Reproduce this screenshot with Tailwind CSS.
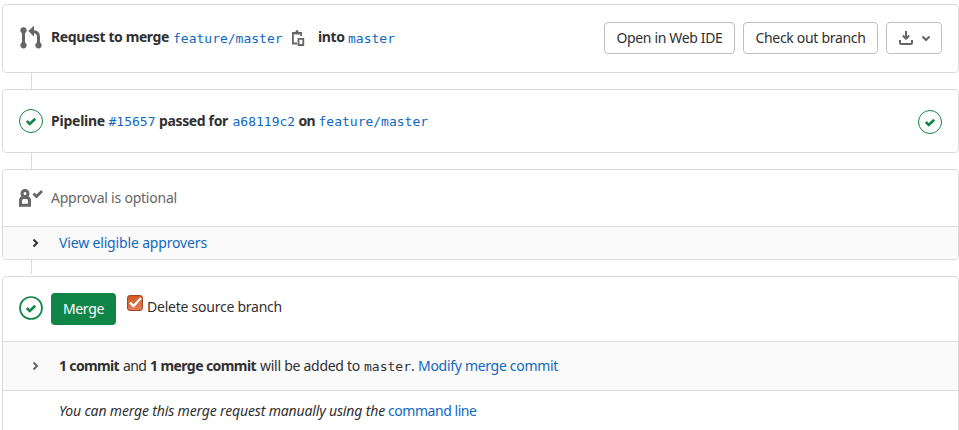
<!DOCTYPE html>
<html lang="en">
<head>
<meta charset="utf-8">
<title>Merge request</title>
<script src="https://cdn.jsdelivr.net/npm/@tailwindcss/browser@4"></script>
</head>
<body class="bg-white h-[430px] overflow-hidden font-['Noto_Sans',sans-serif] text-[14px] leading-5 text-[#303030]">
<main class="ml-[2px] w-[957px] pt-1">

  <section class="flex h-[69px] items-start rounded border border-[#dbdbdb] pr-4 pl-4">
    <svg class="mt-[20px] h-6 w-6 shrink-0" viewBox="0 0 24 24" fill="none" stroke="#666" stroke-width="3">
      <path d="M4.500 5v15M19.500 20v-8c0-3.500-2-5.500-6-5.500"/>
      <g fill="#666" stroke="none"><circle cx="4.500" cy="5.300" r="3.100"/><circle cx="4.500" cy="20.300" r="3.100"/><circle cx="19.500" cy="20.300" r="3.100"/><path d="M9.300 6 14.300 1.200q.7-.5.700.4v9.200q0 .9-.7.300z"/></g>
    </svg>
    <div class="ml-2 flex pt-[22px] whitespace-nowrap">
      <b class="w-[122px] tracking-[-0.4px]">Request to merge</b>
      <a class="w-[118px] pt-[2px] font-['DejaVu_Sans_Mono',monospace] text-[13px] text-[#1068bf]">feature/master</a>
      <svg class="mt-[3px] h-4 w-[27px]" viewBox="0 0 27 16" fill="none" stroke="#666" stroke-width="1.800"><path d="M6 13.500H1.900V3H10v3"/><path d="M7.500 8.900h4.800V15H7.500z"/><path d="M3.500 2H4.500a1.500 2 0 0 1 3 0h1v2.500h-5z" fill="#666" stroke="none"/></svg>
      <b class="w-[30px] tracking-[-0.4px]">into</b>
      <a class="pt-[2px] font-['DejaVu_Sans_Mono',monospace] text-[13px] text-[#1068bf]">master</a>
    </div>
    <div class="mt-[17px] ml-auto flex gap-2">
      <button class="h-8 w-[131px] rounded border border-[#bfbfbf] pb-px tracking-[-0.35px]">Open in Web IDE</button>
      <button class="h-8 w-[135px] rounded border border-[#bfbfbf] pb-px tracking-[-0.31px]">Check out branch</button>
      <button class="flex h-8 w-[56px] items-center gap-1 rounded border border-[#bfbfbf] pl-[11px]" aria-label="Download">
        <svg class="h-4 w-4" viewBox="0 0 16 16" fill="none" stroke="#666" stroke-width="2"><path d="M2 10v3q0 1 1 1h10q1 0 1-1v-3M8 1v7.500M4.800 5.500 8 8.700l3.200-3.200" stroke-linejoin="round"/></svg>
        <svg class="h-4 w-4" viewBox="0 0 16 16" fill="none" stroke="#666" stroke-width="2" stroke-linecap="round"><path d="m5 7 3 3 3-3"/></svg>
      </button>
    </div>
  </section>
  <div class="ml-[29px] h-4 w-px bg-[#dbdbdb]"></div>

  <section class="flex h-16 items-start rounded border border-[#dbdbdb] px-4 pt-[19px]">
    <svg class="h-6 w-6 shrink-0" viewBox="0 0 24 24" fill="none" stroke="#108548"><circle cx="12" cy="12" r="11.500"/><path d="m7.800 12 3 3 5.400-5.200" stroke-width="2.600"/></svg>
    <div class="ml-2 flex pt-[2px] whitespace-nowrap">
      <b class="w-[57.5px] tracking-[-0.24px]">Pipeline</b>
      <a class="w-[50.5px] pt-px font-['DejaVu_Sans_Mono',monospace] text-[13px] text-[#1068bf]">#15657</a>
      <b class="w-[73.5px] tracking-[-0.36px]">passed for</b>
      <a class="w-[66px] pt-px font-['DejaVu_Sans_Mono',monospace] text-[13px] text-[#1068bf]">a68119c2</a>
      <b class="w-[20px] tracking-[-0.7px]">on</b>
      <a class="pt-px font-['DejaVu_Sans_Mono',monospace] text-[13px] text-[#1068bf]">feature/master</a>
    </div>
    <svg class="mt-px ml-auto h-6 w-6 shrink-0" viewBox="0 0 24 24" fill="none" stroke="#108548"><circle cx="12" cy="12" r="11.500"/><path d="m7.800 12 3 3 5.400-5.200" stroke-width="2.600"/></svg>
  </section>
  <div class="ml-[29px] h-4 w-px bg-[#dbdbdb]"></div>

  <section class="h-[91px] overflow-hidden rounded border border-[#dbdbdb]">
    <div class="flex h-14 items-start px-4 pt-[18px] text-[#666]">
      <svg class="h-5 w-6" viewBox="0 0 24 20" fill="none" stroke="#666" stroke-width="3"><circle cx="6" cy="5.500" r="3"/><path d="M1.500 17.300v-4.300c0-2 1-3.500 3-3.500h3c2 0 3 1.500 3 3.500v4.300z"/><path d="m14.500 5.500 3 3 5.500-5.500" stroke-width="2.800"/></svg>
      <span class="ml-2 tracking-[-0.22px]">Approval is optional</span>
    </div>
    <div class="flex h-[33px] items-center border-t border-[#dbdbdb] bg-[#fafafa] pl-6">
      <svg class="h-4 w-4" viewBox="0 0 16 16" fill="none" stroke="#303030" stroke-width="2"><path d="m6.500 4.500 3.500 3.500L6.500 11.500"/></svg>
      <a class="ml-4 tracking-[-0.16px] text-[#1068bf]">View eligible approvers</a>
    </div>
  </section>
  <div class="ml-[29px] h-[14px] w-px bg-[#dbdbdb]"></div>

  <section class="mt-[2px] h-[170px] rounded-t border border-[#dbdbdb]">
    <div class="flex h-16 items-start px-4 pt-4">
      <svg class="mt-[3px] h-6 w-6" viewBox="0 0 24 24" fill="none" stroke="#108548"><circle cx="12" cy="12" r="11" stroke-width="1.700"/><path d="m7.800 12 3 3 5.400-5.200" stroke-width="2.600"/></svg>
      <button class="ml-2 h-8 w-[65px] rounded bg-[#108548] tracking-[-0.3px] text-white">Merge</button>
      <svg class="mt-[2px] ml-[11px] h-4 w-4" viewBox="0 0 16 16" role="checkbox" aria-checked="true"><defs><linearGradient id="checkFill" x2="0" y2="1"><stop stop-color="#d4561f"/><stop offset="1" stop-color="#e2805b"/></linearGradient></defs><rect x=".5" y=".5" width="15" height="15" rx="2.500" fill="url(#checkFill)" stroke="#984a2b"/><path d="m3 7.500 3.500 3.500L14 3" fill="none" stroke="#fff" stroke-width="2.300"/></svg>
      <span class="ml-[4px] pt-1 tracking-[-0.24px]">Delete source branch</span>
    </div>
    <div class="flex h-[50px] items-center border-y border-[#dbdbdb] bg-[#fafafa] pl-6 whitespace-nowrap">
      <svg class="mr-4 h-4 w-4" viewBox="0 0 16 16" fill="none" stroke="#666" stroke-width="2"><path d="m6.500 4.500 3.500 3.500L6.500 11.500"/></svg>
      <b class="w-[64px] tracking-[-0.65px]">1 commit</b>
      <span class="w-[27px] tracking-[-0.6px]">and</span>
      <b class="w-[110px] tracking-[-0.58px]">1 merge commit</b>
      <span class="w-[104px] tracking-[-0.27px]">will be added to</span>
      <span class="w-[47px] pt-px font-['DejaVu_Sans_Mono',monospace] text-[13px]">master</span>
      <span class="w-[7px]">.</span>
      <a class="tracking-[-0.3px] text-[#1068bf]">Modify merge commit</a>
    </div>
    <div class="flex pt-[10px] pl-14 whitespace-nowrap">
      <i class="w-[329px] tracking-[-0.155px]">You can merge this merge request manually using the</i>
      <a class="tracking-[-0.45px] text-[#1068bf]">command line</a>
    </div>
  </section>
</main>
</body>
</html>
